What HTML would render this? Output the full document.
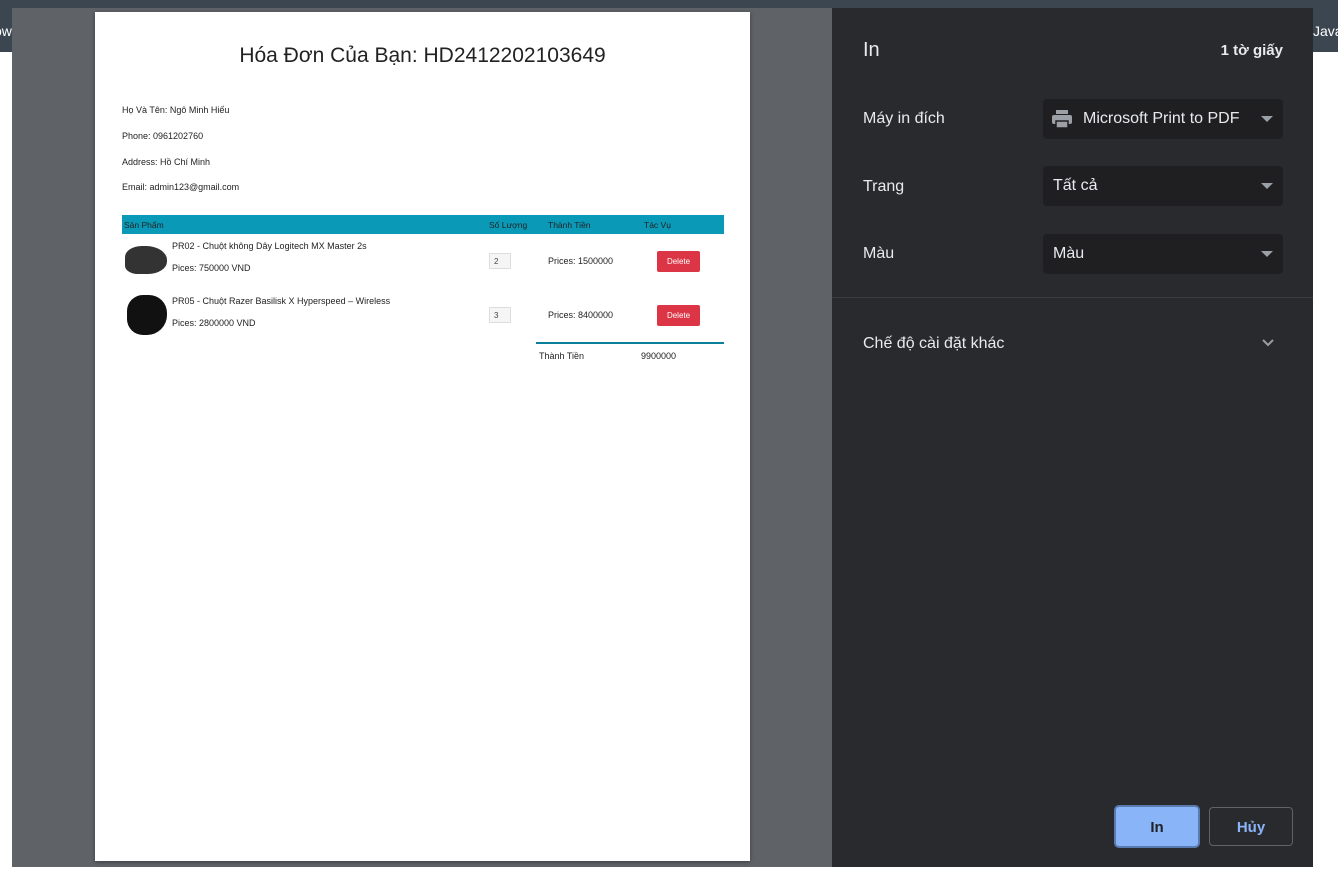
<!DOCTYPE html><html><head><meta charset="utf-8"><style>
*{margin:0;padding:0;box-sizing:border-box}
body{width:1338px;height:889px;position:relative;background:#fff;font-family:"Liberation Sans",sans-serif;overflow:hidden}
.a{position:absolute}
.p{font-size:9px;color:#222}
.sel{position:absolute;left:1043px;width:240px;height:40px;background:#1f1f21;border-radius:4px;color:#e8eaed;font-size:16px;line-height:40px;padding-left:10px}
.sel:after{content:"";position:absolute;right:10px;top:17px;border-left:6px solid transparent;border-right:6px solid transparent;border-top:6px solid #9aa0a6}
.lb{position:absolute;left:863px;color:#e8eaed;font-size:16px}
.del{position:absolute;left:657px;width:43px;height:21px;background:#dc3545;color:#fff;font-size:8px;text-align:center;line-height:21px;border-radius:2px}
.q{position:absolute;left:489px;width:22px;height:16px;border:1px solid #ddd;background:#f5f5f5;font-size:8px;padding:3px 4px;color:#444}
</style></head><body>
<div class="a" style="left:0;top:0;width:1338px;height:8px;background:#3b4650"></div>
<div class="a" style="left:0;top:8px;width:12px;height:44px;background:#3b4650;color:#fff;font-size:14px;line-height:46px;overflow:hidden;text-indent:-6px">ow</div>
<div class="a" style="left:1313px;top:8px;width:25px;height:44px;background:#3b4650;color:#fff;font-size:14px;line-height:46px;overflow:hidden">Java</div>
<div class="a" style="left:12px;top:8px;width:820px;height:859px;background:#5f6368"></div>
<div class="a" style="left:832px;top:8px;width:481px;height:859px;background:#292a2d"></div>
<div class="a" style="left:95px;top:12px;width:655px;height:849px;background:#fff;box-shadow:0 1px 4px rgba(0,0,0,.4)"></div>
<div class="a" style="left:95px;top:44px;width:655px;text-align:center;font-size:21px;color:#222">Hóa Đơn Của Bạn: HD2412202103649</div>
<div class="a p" style="left:122px;top:105px">Họ Và Tên: Ngô Minh Hiếu</div>
<div class="a p" style="left:122px;top:131px">Phone: 0961202760</div>
<div class="a p" style="left:122px;top:157px">Address: Hồ Chí Minh</div>
<div class="a p" style="left:122px;top:182px">Email: admin123@gmail.com</div>
<div class="a" style="left:122px;top:215px;width:602px;height:19px;background:#0a9ab8"></div>
<div class="a p" style="left:124px;top:220px;font-size:8.5px">Sản Phẩm</div>
<div class="a p" style="left:489px;top:220px;font-size:8.5px">Số Lượng</div>
<div class="a p" style="left:548px;top:220px;font-size:8.5px">Thành Tiền</div>
<div class="a p" style="left:644px;top:220px;font-size:8.5px">Tác Vụ</div>
<div class="a" style="left:125px;top:246px;width:42px;height:28px;background:#333;border-radius:40% 50% 45% 30%"></div>
<div class="a" style="left:127px;top:295px;width:40px;height:40px;background:#111;border-radius:40% 45% 50% 40%"></div>
<div class="a p" style="left:172px;top:241px;font-size:9px">PR02 - Chuột không Dây Logitech MX Master 2s</div>
<div class="a p" style="left:172px;top:263px;font-size:9px">Pices: 750000 VND</div>
<div class="a p" style="left:172px;top:296px;font-size:9px">PR05 - Chuột Razer Basilisk X Hyperspeed – Wireless</div>
<div class="a p" style="left:172px;top:318px;font-size:9px">Pices: 2800000 VND</div>
<div class="q" style="top:253px">2</div><div class="q" style="top:307px">3</div>
<div class="a p" style="left:548px;top:256px;font-size:9px">Prices: 1500000</div>
<div class="a p" style="left:548px;top:310px;font-size:9px">Prices: 8400000</div>
<div class="del" style="top:251px">Delete</div><div class="del" style="top:305px">Delete</div>
<div class="a" style="left:536px;top:342px;width:188px;height:2px;background:#0a7f99"></div>
<div class="a p" style="left:539px;top:351px;font-size:9px">Thành Tiền</div>
<div class="a p" style="left:641px;top:351px;font-size:9px">9900000</div>
<div class="a" style="left:863px;top:39px;color:#e8eaed;font-size:20px">In</div>
<div class="a" style="left:1180px;top:42px;width:103px;text-align:right;color:#e8eaed;font-size:15px;font-weight:bold">1 tờ giấy</div>
<div class="lb" style="top:110px">Máy in đích</div>
<div class="sel" style="top:99px;padding-left:40px"><svg class="a" style="left:8px;top:10px" width="22" height="20" viewBox="0 0 22 20"><rect x="5" y="1" width="12" height="4" fill="#9aa0a6"/><rect x="1" y="6" width="20" height="9" rx="2" fill="#9aa0a6"/><rect x="5" y="12" width="12" height="7" fill="#9aa0a6" stroke="#1f1f21" stroke-width="1.5"/></svg>Microsoft Print to PDF</div>
<div class="lb" style="top:178px">Trang</div><div class="sel" style="top:166px">Tất cả</div>
<div class="lb" style="top:245px">Màu</div><div class="sel" style="top:234px">Màu</div>
<div class="a" style="left:832px;top:297px;width:481px;height:1px;background:#3c3d40"></div>
<div class="lb" style="top:335px">Chế độ cài đặt khác</div>
<svg class="a" style="left:1261px;top:338px" width="14" height="10"><path d="M2 2l5 5 5-5" stroke="#9aa0a6" stroke-width="2" fill="none"/></svg>
<div class="a" style="left:1114px;top:805px;width:86px;height:43px;background:#8ab4f8;border:2px solid #5a7bb0;border-radius:5px;color:#202124;font-size:15px;font-weight:bold;text-align:center;line-height:41px">In</div>
<div class="a" style="left:1209px;top:807px;width:84px;height:39px;border:1px solid #5f6368;border-radius:4px;color:#8ab4f8;font-size:15px;font-weight:bold;text-align:center;line-height:39px">Hủy</div>
</body></html>
